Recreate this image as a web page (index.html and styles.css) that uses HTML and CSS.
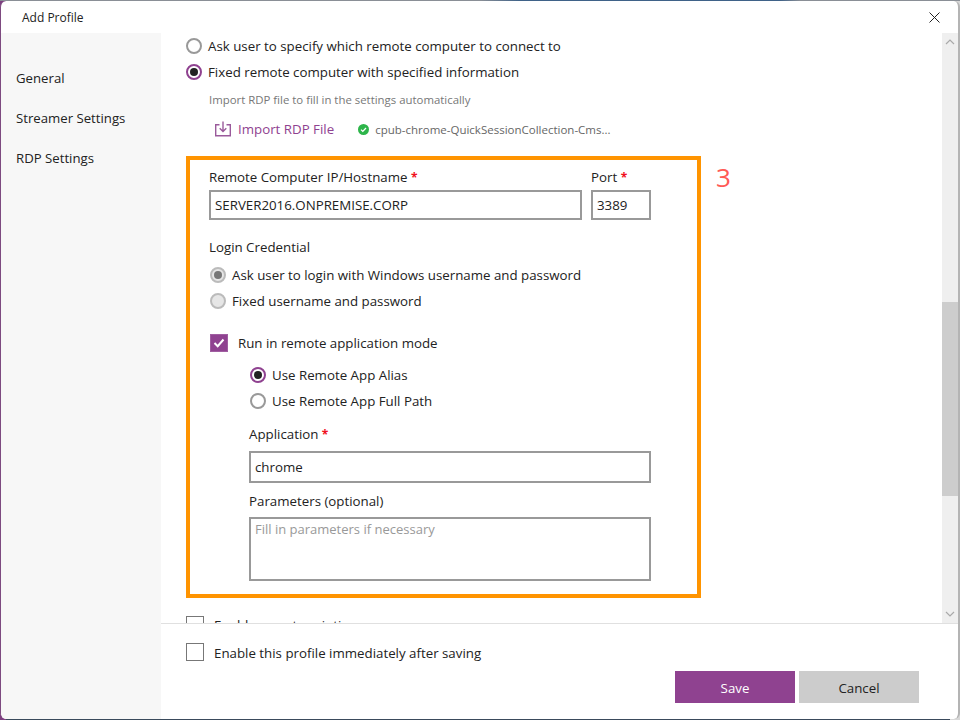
FILE: index.html
```
<!DOCTYPE html>
<html lang="en">
<head>
<meta charset="utf-8">
<title>Add Profile</title>
<link rel="stylesheet" href="styles.css">
</head>
<body>
<div class="window">
  <header class="titlebar">
    <span class="title">Add Profile</span>
    <svg class="close" width="11" height="11" viewBox="0 0 11 11"><path d="M.5.5l10 10M10.500.5l-10 10" stroke="#222" stroke-width="1" fill="none"/></svg>
  </header>
  <div class="body">
    <nav class="sidebar">
      <a class="nav-item">General</a>
      <a class="nav-item">Streamer Settings</a>
      <a class="nav-item">RDP Settings</a>
    </nav>
    <div class="main">
      <div class="upper">
        <div class="scroll">
          <div class="row"><span class="radio"></span><span>Ask user to specify which remote computer to connect to</span></div>
          <div class="row"><span class="radio on"></span><span>Fixed remote computer with specified information</span></div>
          <div class="hint">Import RDP file to fill in the settings automatically</div>
          <div class="import">
            <svg class="import-icon" width="18" height="16" viewBox="0 0 18 16" fill="none" stroke="#9a5a9b" stroke-width="1.400"><path d="M5.500 3.700H1.700v11h14.600v-11h-3.800"/><path d="M9 .5v9.500M5.700 7.300L9 10.600l3.300-3.300"/></svg>
            <span class="import-link">Import RDP File</span>
            <svg class="ok" width="11" height="11" viewBox="0 0 11 11"><circle cx="5.500" cy="5.500" r="5.500" fill="#2db54a"/><path d="M3 5.600l1.800 1.800L8 4" stroke="#fff" stroke-width="1.300" fill="none"/></svg>
            <span class="file">cpub-chrome-QuickSessionCollection-Cms...</span>
          </div>
          <div class="annot-wrap">
            <section class="box">
              <div class="pair">
                <div class="field grow"><label class="label">Remote Computer IP/Hostname <b>*</b></label><div class="input">SERVER2016.ONPREMISE.CORP</div></div>
                <div class="field port"><label class="label">Port <b>*</b></label><div class="input">3389</div></div>
              </div>
              <div class="label cred">Login Credential</div>
              <div class="row sub"><span class="radio dis on"></span><span>Ask user to login with Windows username and password</span></div>
              <div class="row sub"><span class="radio dis"></span><span>Fixed username and password</span></div>
              <div class="check-row">
                <span class="check on"><svg width="12" height="10" viewBox="0 0 12 10"><path d="M1.500 5l3.200 3.200L10.500 1.500" stroke="#fff" stroke-width="2" fill="none"/></svg></span>
                <span>Run in remote application mode</span>
              </div>
              <div class="nested">
                <div class="row"><span class="radio on"></span><span>Use Remote App Alias</span></div>
                <div class="row"><span class="radio"></span><span>Use Remote App Full Path</span></div>
                <label class="label app">Application <b>*</b></label>
                <div class="input tall">chrome</div>
                <label class="label params">Parameters (optional)</label>
                <div class="textarea">Fill in parameters if necessary</div>
              </div>
            </section>
            <span class="annot">3</span>
          </div>
          <div class="check-row clipped"><span class="check"></span><span>Enable remote printing</span></div>
        </div>
        <div class="scrollbar">
          <svg width="10" height="6" viewBox="0 0 10 6"><path d="M1 5l4-4 4 4" stroke="#aaa" stroke-width="1.200" fill="none"/></svg>
          <div class="track"><div class="thumb"></div></div>
          <svg width="10" height="6" viewBox="0 0 10 6"><path d="M1 1l4 4 4-4" stroke="#aaa" stroke-width="1.200" fill="none"/></svg>
        </div>
      </div>
      <footer class="footer">
        <div class="check-row enable"><span class="check"></span><span class="enable-text">Enable this profile immediately after saving</span></div>
        <div class="buttons">
          <button class="btn save">Save</button>
          <button class="btn cancel">Cancel</button>
        </div>
      </footer>
    </div>
  </div>
</div>
</body>
</html>
```
FILE: styles.css
```
* { box-sizing: border-box; }
html, body { margin: 0; padding: 0; }
body {
  width: 960px;
  height: 720px;
  overflow: hidden;
  background:
    linear-gradient(90deg, #8a8f96 0, #8a8f96 480px, #3f6288 520px, #3f6288 780px, #8a8f96 800px) top left / 100% 1px no-repeat,
    linear-gradient(90deg, #7d3f80 0, #7d3f80 6px, #3a4a5c 6px, #3a4a5c 950px, #d8d8d8 950px);
  font-family: "Open Sans", "Noto Sans", "Liberation Sans", sans-serif;
  font-size: 13.3px;
  color: #222;
}
.window {
  width: 960px;
  height: 718px;
  margin-top: 1px;
  background: #fff;
  border-left: 1px solid #7d4a80;
  border-right: 2px solid #b4b4b4;
  border-radius: 6px;
  display: flex;
  flex-direction: column;
  overflow: hidden;
}
.titlebar {
  height: 32px;
  flex: none;
  display: flex;
  align-items: center;
  justify-content: space-between;
  padding: 0 18px 0 21px;
}
.title { font-size: 12px; }
.body { flex: 1; display: flex; min-height: 0; }
.sidebar {
  width: 160px;
  flex: none;
  background: #f7f7f7;
  display: flex;
  flex-direction: column;
  gap: 20px;
  padding: 35px 0 0 15px;
}
.nav-item { height: 20px; line-height: 20px; font-size: 13.2px; }
.main { flex: 1; display: flex; flex-direction: column; min-width: 0; }
.upper { height: 591px; flex: none; display: flex; border-bottom: 1px solid #e0e0e0; }
.scroll { flex: 1; overflow: hidden; padding: 0 0 0 25px; }
.row { display: flex; align-items: center; gap: 6px; height: 26px; }
.radio {
  width: 16px; height: 16px; border-radius: 50%;
  border: 2px solid #999; background: #fff; flex: none; position: relative;
}
.radio.on { border-color: #8f4290; }
.radio.on::after {
  content: ""; position: absolute; inset: 2px; border-radius: 50%; background: #222;
}
.radio.dis { background: #e6e6e6; border-color: #bbb; }
.radio.dis.on::after { background: #777; }
.hint { height: 30px; line-height: 30px; padding-left: 23px; font-size: 11.4px; color: #777; }
.import { display: flex; align-items: center; height: 28px; padding-left: 28px; }
.import-icon { flex: none; }
.import-link { color: #8f4290; margin-left: 6px; font-size: 13.3px; }
.ok { margin-left: 24px; flex: none; }
.file { margin-left: 6px; font-size: 11.5px; color: #666; }
.annot-wrap { display: flex; align-items: flex-start; margin-top: 13px; }
.box {
  width: 515px; height: 442px; border: 4px solid #ff9400; padding: 9px 0 0 19px; flex: none;
}
.annot { font-size: 26px; line-height: 32px; color: #ff5a55; margin: 5px 0 0 15px; font-weight: 400; }
.pair { display: flex; gap: 9px; }
.field { display: flex; flex-direction: column; }
.grow { width: 373px; }
.port { width: 60px; }
.label { display: block; height: 16px; line-height: 16px; }
.label b { color: #f01020; font-weight: 700; font-size: 12px; }
.input {
  height: 30px; margin-top: 5px; border: 2px solid #999; padding-left: 4px;
  line-height: 26px;
}
.cred { margin-top: 19px; }
.sub { padding-left: 1px; }
.cred + .sub { margin-top: 7px; }
.check-row { display: flex; align-items: center; gap: 10px; }
.check {
  width: 18px; height: 18px; border: 1px solid #777; background: #fff; flex: none;
  display: flex; align-items: center; justify-content: center;
}
.check.on { background: #8f4290; border-color: #a05da1; }
.box .check-row { margin: 16px 0 0 1px; height: 26px; }
.nested { padding-left: 40px; width: 442px; margin-top: 6px; }
.nested .row { padding-left: 1px; }
.app { margin-top: 12px; }
.tall { height: 32px; line-height: 28px; margin-top: 9px; }
.params { margin-top: 10px; }
.textarea {
  height: 64px; margin-top: 8px; border: 2px solid #999; padding: 2px 4px; color: #999;
  line-height: 16px; font-size: 13px;
}
.clipped { margin-top: 18px; }
.scrollbar {
  width: 16px; flex: none; background: #efefef;
  display: flex; flex-direction: column; align-items: center; padding: 6px 0;
}
.track { flex: 1; width: 100%; padding-top: 257px; }
.thumb { height: 194px; background: #cdcdcd; }
.footer { flex: 1; padding: 19px 39px 0 25px; display: flex; flex-direction: column; }
.footer .enable { height: 18px; align-items: flex-start; }
.enable-text { line-height: 20px; }
.buttons { display: flex; justify-content: flex-end; gap: 4px; margin-top: 10px; }
.btn {
  width: 120px; height: 32px; border: 0; padding: 2px 0 0; font-family: inherit; font-size: 13.3px;
}
.save { background: #8f4290; color: #fff; }
.cancel { background: #cccccc; color: #222; }
```
